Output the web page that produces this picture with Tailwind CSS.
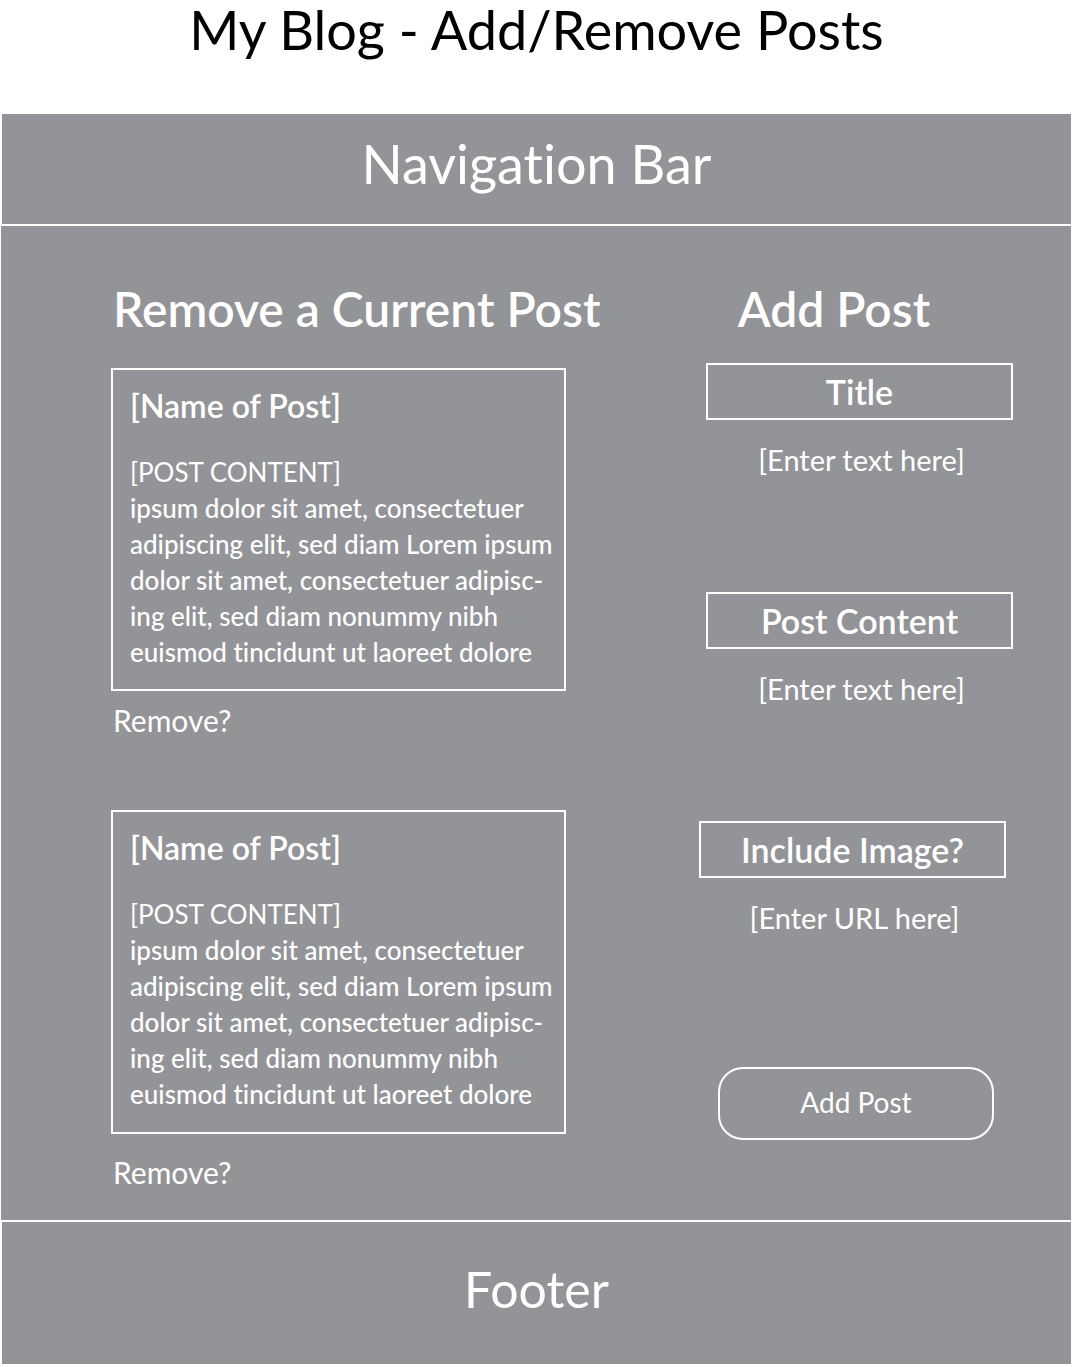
<!DOCTYPE html>
<html lang="en">
<head>
<meta charset="utf-8">
<meta name="viewport" content="width=device-width, initial-scale=1">
<title>My Blog - Add/Remove Posts</title>
<script src="https://cdn.jsdelivr.net/npm/@tailwindcss/browser@4"></script>
</head>
<body class="bg-white font-['Lato',sans-serif] text-white [font-variant-ligatures:none]">
  <header class="pb-[54px] text-center text-black">
    <h1 class="text-[54px] leading-[60px]">My Blog - Add/Remove Posts</h1>
  </header>

  <nav class="mx-[2px] flex h-[110px] items-center justify-center bg-[#939498] pb-2.5 text-[54px] leading-[58px]">Navigation Bar</nav>

  <main class="mt-[2px] mr-[2px] ml-px grid min-h-[994px] grid-cols-[minmax(0,455fr)_minmax(0,314fr)] gap-x-[133px] bg-[#939498] pt-[53px] pr-[58px] pb-7 pl-[110px]">
    <section>
      <h2 class="pl-[2px] text-5xl leading-[60px] font-semibold whitespace-nowrap">Remove a Current Post</h2>

      <article class="mt-[29px] border-2 border-white pt-4 pb-[19px] pl-[17px]">
        <h3 class="text-[32px] leading-10 font-semibold">[Name of Post]</h3>
        <p class="mt-7 text-[26px] leading-9">[POST CONTENT]</p>
        <p class="text-[26px] leading-9 font-medium">ipsum dolor sit amet, consectetuer<br>adipiscing elit, sed diam Lorem ipsum<br>dolor sit amet, consectetuer adipisc-<br>ing elit, sed diam nonummy nibh<br>euismod tincidunt ut laoreet dolore</p>
      </article>
      <button type="button" class="mt-[11px] block pl-[2px] text-3xl leading-9">Remove?</button>

      <article class="mt-[72px] border-2 border-white pt-4 pb-5 pl-[17px]">
        <h3 class="text-[32px] leading-10 font-semibold">[Name of Post]</h3>
        <p class="mt-7 text-[26px] leading-9">[POST CONTENT]</p>
        <p class="text-[26px] leading-9 font-medium">ipsum dolor sit amet, consectetuer<br>adipiscing elit, sed diam Lorem ipsum<br>dolor sit amet, consectetuer adipisc-<br>ing elit, sed diam nonummy nibh<br>euismod tincidunt ut laoreet dolore</p>
      </article>
      <button type="button" class="mt-5 block pl-[2px] text-3xl leading-9">Remove?</button>
    </section>

    <form>
      <h2 class="pr-11 text-center text-5xl leading-[60px] font-semibold">Add Post</h2>

      <div class="mt-6 pl-[7px]">
        <label for="title" class="flex h-[57px] items-center justify-center border-2 border-white text-[34px] font-semibold">Title</label>
        <input id="title" type="text" placeholder="[Enter text here]" class="mt-5 block h-10 w-full pl-1 text-center text-[29px] leading-10 placeholder:text-white">
      </div>

      <div class="mt-28 pl-[7px]">
        <label for="content" class="flex h-[57px] items-center justify-center border-2 border-white text-[34px] font-semibold">Post Content</label>
        <input id="content" type="text" placeholder="[Enter text here]" class="mt-5 block h-10 w-full pl-1 text-center text-[29px] leading-10 placeholder:text-white">
      </div>

      <div class="mt-28 pr-[7px]">
        <label for="image" class="flex h-[57px] items-center justify-center border-2 border-white text-[34px] font-semibold">Include Image?</label>
        <input id="image" type="url" placeholder="[Enter URL here]" class="mt-5 block h-10 w-full pl-1 text-center text-[29px] leading-10 placeholder:text-white">
      </div>

      <button type="submit" class="mx-auto mt-[129px] block h-[73px] w-[276px] rounded-[25px] border-2 border-white pb-1 text-[28px]">Add Post</button>
    </form>
  </main>

  <footer class="mx-[2px] mt-[2px] mb-[3px] flex h-[142px] items-center justify-center bg-[#939498] pb-2 text-[50px] leading-[58px]">Footer</footer>
</body>
</html>
